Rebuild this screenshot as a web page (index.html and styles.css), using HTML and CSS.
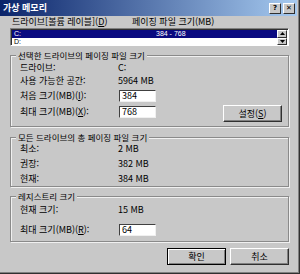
FILE: index.html
```html
<!DOCTYPE html>
<html lang="ko">
<head>
    <meta charset="UTF-8">
    <title>가상 메모리</title>
    <link rel="stylesheet" href="styles.css">
</head>
<body>
    <div class="window">
        <div class="titlebar">
            <span class="title">가상 메모리</span>
            <div class="caption-buttons">
                <span class="cap-btn">?</span>
                <span class="cap-btn">✕</span>
            </div>
        </div>

        <div class="content">
            <div class="list-header">
                <span class="col-drive">드라이브[볼륨 레이블](<u>D</u>)</span>
                <span>페이징 파일 크기(MB)</span>
            </div>

            <div class="listbox">
                <div class="list-rows">
                    <div class="list-row selected">
                        <span class="col-drive">C:</span>
                        <span>384 - 768</span>
                    </div>
                    <div class="list-row">
                        <span class="col-drive">D:</span>
                        <span></span>
                    </div>
                </div>
                <div class="scrollbar">
                    <span class="scroll-btn"><svg width="5" height="3" viewBox="0 0 5 3"><path d="M2.5 0 L5 3 L0 3 Z" fill="#000"/></svg></span>
                    <span class="scroll-btn"><svg width="5" height="3" viewBox="0 0 5 3"><path d="M0 0 L5 0 L2.5 3 Z" fill="#000"/></svg></span>
                </div>
            </div>

            <div class="group group-drive">
                <span class="group-title">선택한 드라이브의 페이징 파일 크기</span>
                <div class="row">
                    <span class="label">드라이브:</span>
                    <span>C:</span>
                </div>
                <div class="row">
                    <span class="label">사용 가능한 공간:</span>
                    <span>5964 MB</span>
                </div>
                <div class="row row-input">
                    <span class="label">처음 크기(MB)(<u>I</u>):</span>
                    <span class="textbox">384</span>
                </div>
                <div class="row row-input">
                    <span class="label">최대 크기(MB)(<u>X</u>):</span>
                    <span class="textbox">768</span>
                    <span class="button btn-set">설정(<u>S</u>)</span>
                </div>
            </div>

            <div class="group group-total">
                <span class="group-title">모든 드라이브의 총 페이징 파일 크기</span>
                <div class="row">
                    <span class="label">최소:</span>
                    <span>2 MB</span>
                </div>
                <div class="row">
                    <span class="label">권장:</span>
                    <span>382 MB</span>
                </div>
                <div class="row">
                    <span class="label">현재:</span>
                    <span>384 MB</span>
                </div>
            </div>

            <div class="group group-registry">
                <span class="group-title">레지스트리 크기</span>
                <div class="row">
                    <span class="label">현재 크기:</span>
                    <span>15 MB</span>
                </div>
                <div class="row row-input">
                    <span class="label">최대 크기(MB)(<u>R</u>):</span>
                    <span class="textbox">64</span>
                </div>
            </div>

            <div class="dialog-buttons">
                <span class="button btn-default">확인</span>
                <span class="button">취소</span>
            </div>
        </div>
    </div>
</body>
</html>
```

FILE: styles.css
```css
body {
    margin: 0;
    font-family: "Noto Sans CJK KR", "Noto Sans", sans-serif;
    font-size: 9px;
    color: #000;
    background: #c8c8c8;
}
u {
    text-decoration: underline;
}
.window {
    width: 300px;
    height: 274px;
    box-sizing: border-box;
    background: #c8c8c8;
    border-right: 1px solid #303030;
    border-bottom: 1px solid #303030;
    box-shadow: inset -1px -1px 0 #808080, inset -2px -2px 0 #c8c8c8;
}
.titlebar {
    height: 16px;
    width: 297px;
    display: flex;
    align-items: center;
    justify-content: space-between;
    background: linear-gradient(to right, #0a246a, #a6caf0);
    color: #fff;
}
.title {
    font-weight: bold;
    padding-left: 3px;
    line-height: 16px;
}
.caption-buttons {
    display: flex;
    gap: 2px;
    padding-right: 2px;
}
.cap-btn {
    width: 10px;
    height: 9px;
    display: flex;
    align-items: center;
    justify-content: center;
    background: #c8c8c8;
    color: #000;
    font-family: "DejaVu Sans", sans-serif;
    font-weight: bold;
    font-size: 7px;
    border: 1px solid;
    border-color: #fff #303030 #303030 #fff;
}
.content {
    display: flex;
    flex-direction: column;
    padding-right: 10px;
}
.list-header {
    height: 12px;
    line-height: 12px;
    display: flex;
    padding-left: 12px;
}
.col-drive {
    width: 120px;
}
.listbox {
    margin-left: 10px;
    width: 279px;
    height: 18px;
    box-sizing: border-box;
    display: flex;
    background: #fff;
    border: 1px solid;
    border-color: #808080 #fff #fff #808080;
    box-shadow: inset 1px 1px 0 #303030;
    padding: 1px 1px 0 1px;
}
.list-rows {
    flex: 1;
}
.list-row {
    height: 8px;
    line-height: 8px;
    font-family: "Liberation Sans", sans-serif;
    font-size: 7px;
    display: flex;
    padding-left: 2px;
}
.list-row.selected {
    background: #0a0a80;
    color: #fff;
}
.list-row .col-drive {
    width: 142px;
}
.scrollbar {
    width: 10px;
    display: flex;
    flex-direction: column;
}
.scroll-btn {
    height: 8px;
    box-sizing: border-box;
    display: flex;
    align-items: center;
    justify-content: center;
    background: #c8c8c8;
    border: 1px solid;
    border-color: #fff #303030 #303030 #fff;
}
.group {
    position: relative;
    margin-left: 10px;
    width: 279px;
    box-sizing: border-box;
    border: 1px solid #8a8a8a;
    box-shadow: inset 1px 1px 0 #f0f0f0, 1px 1px 0 #f0f0f0;
    padding-left: 9px;
    display: flex;
    flex-direction: column;
}
.group-title {
    position: absolute;
    top: -6px;
    left: 5px;
    padding: 0 2px;
    font-size: 8.5px;
    line-height: 10px;
    background: #c8c8c8;
}
.group-drive {
    margin-top: 9px;
    height: 72px;
    padding-top: 7px;
    gap: 3px;
}
.group-drive .row-input {
    margin-top: 1px;
}
.group-total {
    margin-top: 10px;
    height: 50px;
    padding-top: 6px;
    gap: 5px;
}
.group-registry {
    margin-top: 9px;
    height: 46px;
    padding-top: 8px;
    gap: 9px;
}
.row {
    height: 10px;
    line-height: 10px;
    display: flex;
    align-items: flex-start;
}
.row-input {
    height: 12px;
    line-height: 12px;
}
.label {
    width: 98px;
    flex-shrink: 0;
}
.textbox {
    width: 37px;
    height: 12px;
    box-sizing: border-box;
    margin-left: 1px;
    padding-left: 2px;
    line-height: 10px;
    background: #fff;
    border: 1px solid;
    border-color: #404040 #f0f0f0 #f0f0f0 #404040;
}
.button {
    height: 17px;
    box-sizing: border-box;
    display: flex;
    align-items: center;
    justify-content: center;
    background: #c8c8c8;
    border: 1px solid;
    border-color: #fff #303030 #303030 #fff;
    box-shadow: inset -1px -1px 0 #808080;
}
.btn-set {
    width: 59px;
    margin-left: auto;
    margin-right: 6px;
    margin-top: -1px;
}
.dialog-buttons {
    margin-top: 6px;
    display: flex;
    justify-content: flex-end;
    gap: 4px;
}
.dialog-buttons .button {
    width: 59px;
}
.btn-default {
    border: 1px solid #000;
    box-shadow: inset 1px 1px 0 #fff, inset -1px -1px 0 #808080;
}
```
